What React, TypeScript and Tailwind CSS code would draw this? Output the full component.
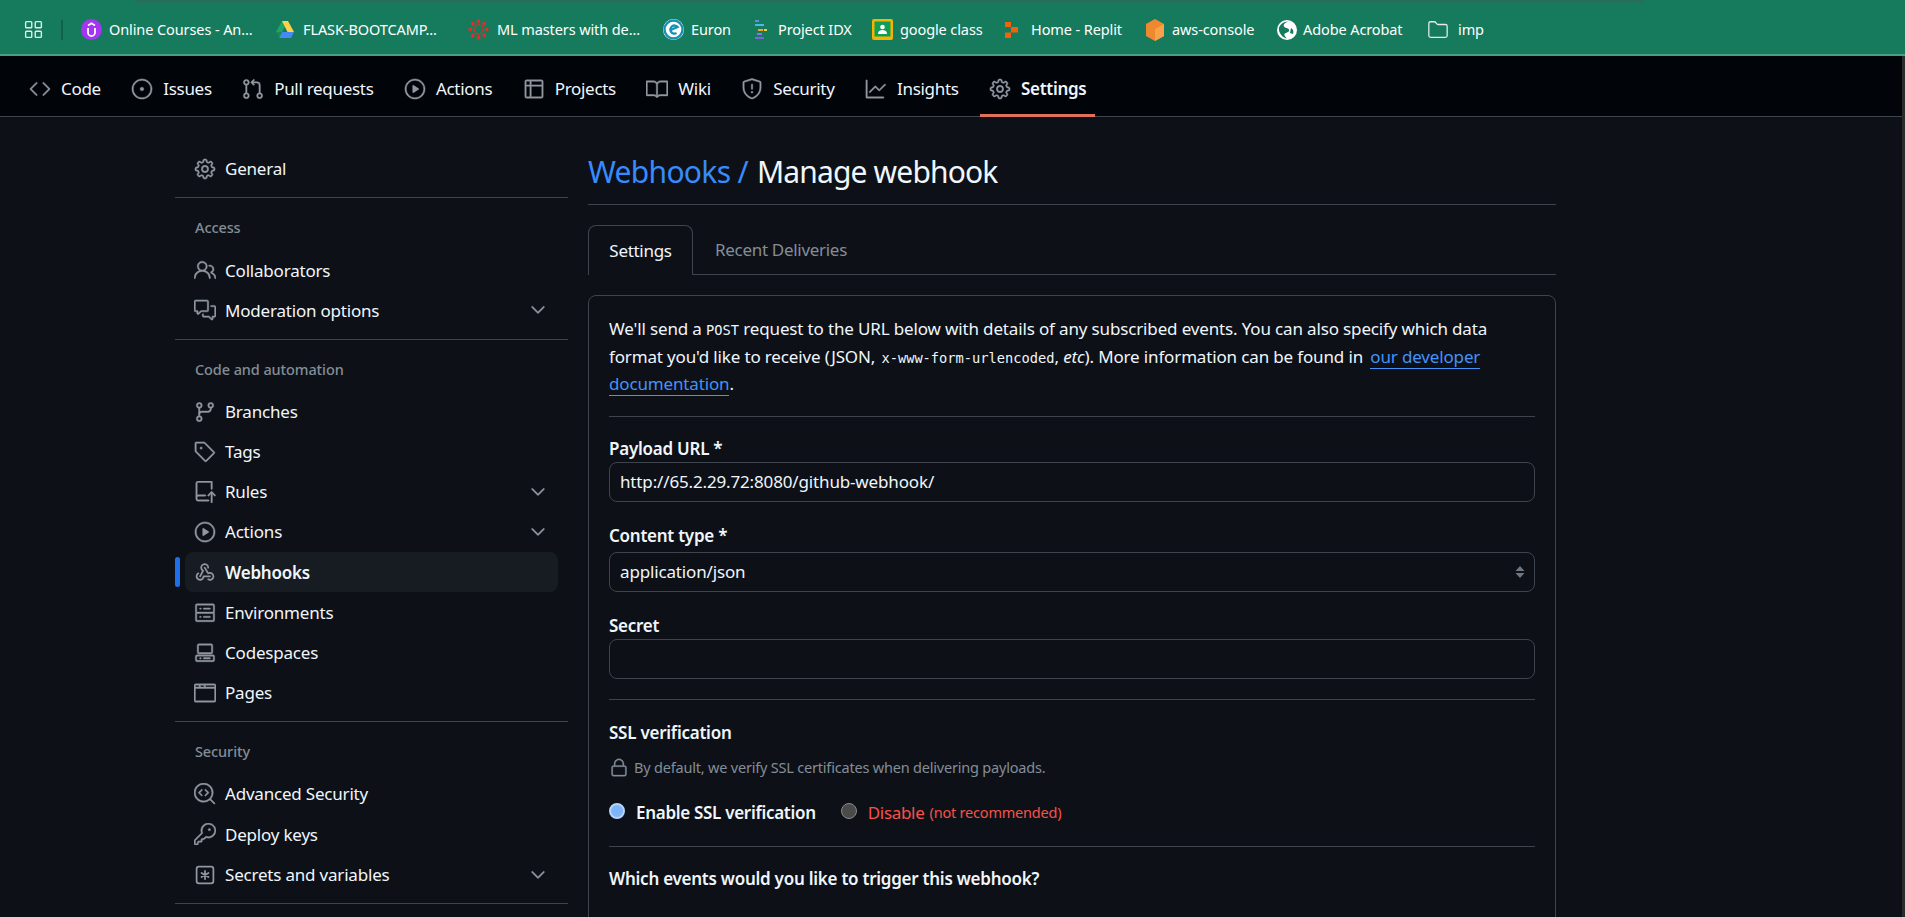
import { ReactNode } from 'react';
import {
  GoBook,
  GoBrowser,
  GoChevronDown,
  GoCode,
  GoCodescan,
  GoCodespaces,
  GoCommentDiscussion,
  GoGear,
  GoGitBranch,
  GoGitPullRequest,
  GoGraph,
  GoIssueOpened,
  GoKey,
  GoLock,
  GoPeople,
  GoPlay,
  GoRepoPush,
  GoServer,
  GoShield,
  GoTable,
  GoTag,
} from 'react-icons/go';
import { Folder, LayoutGrid } from 'lucide-react';

const FONT = "font-['Noto_Sans','Open_Sans',sans-serif]";

type IconProps = { size?: number; className?: string; strokeWidth?: number };

function WebhookIcon({ size = 20, className }: IconProps) {
  return (
    <svg width={size} height={size} viewBox="-1.5 -1.5 19 19" fill="currentColor" className={className}>
      <path d="M5.5 4.25a2.25 2.25 0 0 1 4.5 0 .75.75 0 0 0 1.5 0 3.75 3.75 0 1 0-6.14 2.889l-2.272 4.258a.75.75 0 0 0 1.324.706L7 7.25a.75.75 0 0 0-.309-1.015A2.25 2.25 0 0 1 5.5 4.25Z" />
      <path d="M7.364 3.607a.75.75 0 0 1 1.03.257l2.608 4.349a3.75 3.75 0 1 1-.628 6.785.75.75 0 0 1 .752-1.299 2.25 2.25 0 1 0-.033-3.88.75.75 0 0 1-1.03-.256L7.107 4.636a.75.75 0 0 1 .257-1.03Z" />
      <path d="M2.9 8.776A.75.75 0 0 1 2.625 9.8 2.25 2.25 0 1 0 6 11.75a.75.75 0 0 1 .75-.751h5.5a.75.75 0 0 1 0 1.5H7.425a3.751 3.751 0 1 1-5.55-3.998.75.75 0 0 1 1.024.274Z" />
    </svg>
  );
}

function KeyAsteriskIcon({ size = 20, className }: IconProps) {
  return (
    <svg width={size} height={size} viewBox="-1.5 -1.5 19 19" fill="currentColor" className={className}>
      <path d="M0 2.75A2.75 2.75 0 0 1 2.75 0h10.5A2.75 2.75 0 0 1 16 2.75v10.5A2.75 2.75 0 0 1 13.25 16H2.75A2.75 2.75 0 0 1 0 13.25Zm2.75-1.25c-.69 0-1.25.56-1.25 1.25v10.5c0 .69.56 1.25 1.25 1.25h10.5c.69 0 1.25-.56 1.25-1.25V2.75c0-.69-.56-1.25-1.25-1.25Z" />
      <path d="M8 4.5v7M5 6.25l6 3.5M11 6.25l-6 3.5" stroke="currentColor" strokeWidth="1.5" strokeLinecap="round" />
    </svg>
  );
}

function UdemyIcon() {
  return (
    <svg width="21" height="21" viewBox="0 0 21 21">
      <circle cx="10.5" cy="10.5" r="10.5" fill="#a435f0" />
      <path d="M7 9v4.5a3.5 3.5 0 0 0 7 0V9" fill="none" stroke="#fff" strokeWidth="1.8" />
      <path d="M7 6.5l3.5-2.2L14 6.5" fill="none" stroke="#fff" strokeWidth="1.6" />
    </svg>
  );
}

function DriveIcon() {
  return (
    <svg width="20" height="20" viewBox="0 0 20 20">
      <path d="M7 1h6l-6 11H1z" fill="#1fa463" />
      <path d="M13 1l6 11h-6.5L7 1z" fill="#ffd04b" />
      <path d="M19 12l-3 6H4l3-6z" fill="#4688f4" />
      <path d="M1 12h6l-3 6z" fill="#1a8a55" />
    </svg>
  );
}

function CanvasIcon() {
  const dots = [0, 45, 90, 135, 180, 225, 270, 315];
  return (
    <svg width="21" height="21" viewBox="0 0 21 21">
      <circle cx="10.5" cy="10.5" r="4.6" fill="none" stroke="#d8312a" strokeWidth="1.6" strokeDasharray="2 1" />
      {dots.map((a) => (
        <circle
          key={a}
          cx={10.5 + 8.2 * Math.cos((a * Math.PI) / 180)}
          cy={10.5 + 8.2 * Math.sin((a * Math.PI) / 180)}
          r="2"
          fill="#d8312a"
        />
      ))}
    </svg>
  );
}

function EuronIcon() {
  return (
    <svg width="21" height="21" viewBox="0 0 21 21">
      <circle cx="10.5" cy="10.5" r="10.5" fill="#fff" />
      <circle cx="10.5" cy="10.5" r="9" fill="none" stroke="#1593b5" strokeWidth="2.4" />
      <path d="M6.5 11.5l8-3.5a4 4 0 1 0-1 6" fill="none" stroke="#1593b5" strokeWidth="2.4" />
    </svg>
  );
}

function IdxIcon() {
  return (
    <svg width="18" height="22" viewBox="0 0 18 22">
      <rect x="3" y="1" width="4" height="2" fill="#5f8df0" />
      <rect x="3" y="5" width="9" height="2" fill="#4fb8e8" />
      <rect x="6" y="10" width="5" height="2" fill="#f0a33a" />
      <rect x="12" y="10" width="3" height="2" fill="#e8d44a" />
      <rect x="5" y="14" width="5" height="2" fill="#9c6cf0" />
      <rect x="3" y="18" width="9" height="2" fill="#7e63e0" />
    </svg>
  );
}

function ClassroomIcon() {
  return (
    <svg width="21" height="21" viewBox="0 0 21 21">
      <rect width="21" height="21" rx="2" fill="#f4b400" />
      <rect x="2.5" y="2.5" width="16" height="15" fill="#0f9d58" />
      <circle cx="10.5" cy="8" r="2.3" fill="#fff" />
      <path d="M6 15c0-3 2-4 4.5-4s4.5 1 4.5 4z" fill="#fff" />
    </svg>
  );
}

function ReplitIcon() {
  return (
    <svg width="16" height="16" viewBox="0 0 16 16">
      <rect x="1" width="6" height="5" fill="#f26207" />
      <rect x="7" y="5" width="7" height="5.5" fill="#f26207" />
      <rect x="1" y="10.5" width="6" height="5.5" fill="#f26207" />
    </svg>
  );
}

function AwsIcon() {
  return (
    <svg width="20" height="22" viewBox="0 0 20 22">
      <path d="M10 0l9 5v12l-9 5-9-5V5z" fill="#f0892e" />
      <path d="M10 10l9-5v12l-9 5z" fill="#f9a24a" />
    </svg>
  );
}

function AcrobatIcon() {
  return (
    <svg width="20" height="20" viewBox="0 0 20 20">
      <circle cx="10" cy="10" r="10" fill="#fff" />
      <path d="M11 1.5c-3 1-5 3-4 5s4 1 5 3-2 3-4 4 1 4 2 5c-2 0-7-3-8-8s4-9 9-9z" fill="#167b5c" />
      <path d="M14 8c2 1 3 3 2 6l-3-1z" fill="#167b5c" />
    </svg>
  );
}

const bookmarks: { label: string; icon: ReactNode; box: string; text: string }[] = [
  { label: 'Online Courses - An...', icon: <UdemyIcon />, box: 'w-[28px]', text: 'w-[143px]' },
  { label: 'FLASK-BOOTCAMP...', icon: <DriveIcon />, box: 'w-[28px]', text: 'w-[142px]' },
  { label: 'ML masters with de...', icon: <CanvasIcon />, box: 'w-[29px]', text: 'w-[143px]' },
  { label: 'Euron', icon: <EuronIcon />, box: 'w-[28px]', text: 'w-[38px]' },
  { label: 'Project IDX', icon: <IdxIcon />, box: 'w-[26px]', text: 'w-[71px]' },
  { label: 'google class', icon: <ClassroomIcon />, box: 'w-[28px]', text: 'w-[81px]' },
  { label: 'Home - Replit', icon: <ReplitIcon />, box: 'w-[27px]', text: 'w-[91px]' },
  { label: 'aws-console', icon: <AwsIcon />, box: 'w-[27px]', text: 'w-[82px]' },
  { label: 'Adobe Acrobat', icon: <AcrobatIcon />, box: 'w-[26px]', text: 'w-[101px]' },
  {
    label: 'imp',
    icon: <Folder size={22} strokeWidth={1.4} className="text-[#e3ece8]" />,
    box: 'w-[31px]',
    text: 'w-[25px]',
  },
];

function BookmarkBar() {
  return (
    <div className="relative flex h-[56px] shrink-0 items-center border-b-2 border-[#4d9d85] bg-[#167b5c] pl-[23px] pt-[5px]">
      <div className="absolute left-[135px] top-0 h-[3px] w-[1510px] rounded-br-sm bg-[#25705c]" />
      <LayoutGrid size={21} strokeWidth={1.6} className="text-[#dfeee8]" />
      <div className="ml-[17px] mr-[18px] h-[20px] w-[2px] bg-[#0f6148]" />
      <div className="flex items-center gap-[23px]">
        {bookmarks.map((b) => (
          <div key={b.label} className="flex items-center">
            <div className={`flex items-center ${b.box}`}>{b.icon}</div>
            <span className={`whitespace-nowrap text-[14.5px] tracking-[-0.1px] text-white ${b.text}`}>{b.label}</span>
          </div>
        ))}
      </div>
    </div>
  );
}

const repoTabs = [
  { label: 'Code', icon: GoCode },
  { label: 'Issues', icon: GoIssueOpened },
  { label: 'Pull requests', icon: GoGitPullRequest },
  { label: 'Actions', icon: GoPlay },
  { label: 'Projects', icon: GoTable },
  { label: 'Wiki', icon: GoBook },
  { label: 'Security', icon: GoShield },
  { label: 'Insights', icon: GoGraph },
  { label: 'Settings', icon: GoGear, active: true },
];

function RepoNav() {
  return (
    <nav className="flex h-[61px] shrink-0 gap-[12.4px] border-b border-[#3d444d] bg-[#010409] pl-[20px]">
      {repoTabs.map((t) => (
        <a
          key={t.label}
          className={`-mb-px flex h-[61px] items-center gap-[10px] border-b-[3px] px-[9px] pt-[8px] text-[17px] tracking-[-0.3px] text-[#f0f6fc] ${
            t.active ? 'border-[#e0705a] font-semibold' : 'border-transparent'
          }`}
        >
          <t.icon size={22} strokeWidth={0.5} className="text-[#9198a1]" />
          {t.label}
        </a>
      ))}
    </nav>
  );
}

type SideItem = {
  label: string;
  icon: (props: IconProps) => ReactNode;
  chevron?: boolean;
  active?: boolean;
};

const sections: { title: string; items: SideItem[] }[] = [
  {
    title: 'Access',
    items: [
      { label: 'Collaborators', icon: GoPeople },
      { label: 'Moderation options', icon: GoCommentDiscussion, chevron: true },
    ],
  },
  {
    title: 'Code and automation',
    items: [
      { label: 'Branches', icon: GoGitBranch },
      { label: 'Tags', icon: GoTag },
      { label: 'Rules', icon: GoRepoPush, chevron: true },
      { label: 'Actions', icon: GoPlay, chevron: true },
      { label: 'Webhooks', icon: WebhookIcon, active: true },
      { label: 'Environments', icon: GoServer },
      { label: 'Codespaces', icon: GoCodespaces },
      { label: 'Pages', icon: GoBrowser },
    ],
  },
  {
    title: 'Security',
    items: [
      { label: 'Advanced Security', icon: GoCodescan },
      { label: 'Deploy keys', icon: GoKey },
      { label: 'Secrets and variables', icon: KeyAsteriskIcon, chevron: true },
    ],
  },
];

function SideRow({ item }: { item: SideItem }) {
  return (
    <div className="relative ml-[10px] mr-[10px] flex h-[40.2px] items-center">
      {item.active && <div className="absolute -left-[10px] top-[5px] h-[30px] w-[5px] rounded-full bg-[#1f6feb]" />}
      <div
        className={`flex h-[40px] flex-1 items-center gap-[9px] rounded-lg pl-[9px] pr-[9px] text-[17px] tracking-[-0.2px] text-[#f0f6fc] ${
          item.active ? 'bg-[#171b22] font-semibold' : ''
        }`}
      >
        <item.icon size={22} strokeWidth={0.5} className="text-[#9198a1]" />
        <span className="flex-1">{item.label}</span>
        {item.chevron && <GoChevronDown size={22} strokeWidth={0.5} className="text-[#9198a1]" />}
      </div>
    </div>
  );
}

function Sidebar() {
  return (
    <aside className="w-[393px] shrink-0 pt-[32px]">
      <SideRow item={{ label: 'General', icon: GoGear }} />
      {sections.map((s) => (
        <div key={s.title}>
          <div className="mt-[8px] h-px bg-[#3d444d]" />
          <div className="h-[52px] pl-[20px] pt-[19px] text-[14.5px] font-medium leading-5 tracking-[-0.1px] text-[#848d97]">
            {s.title}
          </div>
          {s.items.map((i) => (
            <SideRow key={i.label} item={i} />
          ))}
        </div>
      ))}
      <div className="mt-[8px] h-px bg-[#3d444d]" />
    </aside>
  );
}

function FieldLabel({ children, className }: { children: ReactNode; className: string }) {
  return <div className={`h-[24px] text-[17px] font-semibold leading-6 tracking-[-0.25px] text-[#f0f6fc] ${className}`}>{children}</div>;
}

function Code({ children, className = '' }: { children: ReactNode; className?: string }) {
  return <code className={`font-['DejaVu_Sans_Mono',monospace] text-[13.7px] tracking-normal ${className}`}>{children}</code>;
}

const inputCls =
  'block h-[40px] w-full rounded-lg border border-[#3d444d] bg-[#0d1117] px-[10px] text-[17px] tracking-[-0.15px] text-[#f0f6fc] outline-none appearance-none';

function WebhookForm() {
  return (
    <div className="mt-[20px] rounded-lg border border-[#3d444d] px-[20px] pt-[20px]">
      <p className="text-[17px] leading-[26.6px] tracking-[-0.15px] text-[#f0f6fc]">
        We'll send a <Code>POST</Code> request to the URL below with details of any subscribed events. You can also specify which data
        <br />
        format you'd like to receive (JSON, <Code className="ml-[2px]">x-www-form-urlencoded</Code>, <em>etc</em>). More information can be found in{' '}
        <a className="ml-[3px] border-b border-[#4493f8] text-[#4493f8]">our developer</a>
        <br />
        <a className="border-b border-[#4493f8] text-[#4493f8]">documentation</a>.
      </p>
      <div className="mt-[18px] h-px bg-[#3d444d]" />

      <FieldLabel className="mt-[20px]">Payload URL *</FieldLabel>
      <input className={`mt-px ${inputCls}`} defaultValue="http://65.2.29.72:8080/github-webhook/" />

      <FieldLabel className="mt-[22px]">Content type *</FieldLabel>
      <div className="relative mt-[4px]">
        <select className={inputCls} defaultValue="json">
          <option value="json">application/json</option>
        </select>
        <svg className="absolute right-[10px] top-[14px]" width="10" height="12" viewBox="0 0 10 12" fill="#6e7681">
          <path d="M5 0l4.5 5H.5zM5 12L.5 7h9z" />
        </svg>
      </div>

      <FieldLabel className="mt-[22px]">Secret</FieldLabel>
      <input className={`mt-px ${inputCls}`} />

      <div className="mt-[20px] h-px bg-[#3d444d]" />

      <FieldLabel className="mt-[21px]">SSL verification</FieldLabel>
      <div className="mt-[13px] flex h-[20px] items-center gap-[5px] text-[14.5px] tracking-[-0.2px] text-[#848d97]">
        <GoLock size={20} strokeWidth={0.4} />
        By default, we verify SSL certificates when delivering payloads.
      </div>
      <div className="mt-[23px] flex h-[24px] items-center">
        <span className="-mt-[3px] h-[16px] w-[16px] rounded-full border-2 border-[#b7d4f8] bg-[#7db4fb]" />
        <span className="ml-[11px] text-[17px] font-semibold tracking-[-0.3px] text-[#f0f6fc]">Enable SSL verification</span>
        <span className="-mt-[3px] ml-[25px] h-[16px] w-[16px] rounded-full border border-[#8a8a8a] bg-[#4a4a4a]" />
        <span className="ml-[11px] text-[17px] tracking-[-0.3px] text-[#f85149]">Disable</span>
        <span className="ml-[5px] text-[14.5px] tracking-[-0.2px] text-[#f85149]">(not recommended)</span>
      </div>

      <div className="mt-[21px] h-px bg-[#3d444d]" />
      <FieldLabel className="mt-[20px]">Which events would you like to trigger this webhook?</FieldLabel>
      <div className="mt-[23px] flex h-[24px] items-center">
        <span className="h-[16px] w-[16px] rounded-full border-2 border-[#b7d4f8] bg-[#7db4fb]" />
      </div>
    </div>
  );
}

function Main() {
  return (
    <main className="ml-[20px] w-[968px] shrink-0 pt-[32px]">
      <h1 className="h-[56px] border-b border-[#3d444d] text-[30px] leading-[46px] tracking-[-0.7px] text-[#f0f6fc]">
        <a className="text-[#388bfd]">Webhooks /</a> <span className="ml-[2px] tracking-[-0.85px]">Manage webhook</span>
      </h1>
      <div className="mt-[20px] flex h-[50px] border-b border-[#3d444d]">
        <div className="-mb-px flex h-[50px] w-[105px] items-center justify-center rounded-t-lg border border-b-0 border-[#3d444d] bg-[#0d1117] text-[17px] tracking-[-0.3px] text-[#f0f6fc]">
          Settings
        </div>
        <div className="ml-[22px] flex items-center text-[17px] tracking-[-0.3px] text-[#848d97]">Recent Deliveries</div>
      </div>
      <WebhookForm />
    </main>
  );
}

export default function App() {
  return (
    <div className={`flex h-[917px] flex-col overflow-hidden bg-[#0d1117] ${FONT}`}>
      <BookmarkBar />
      <div className="flex min-h-0 flex-1">
        <div className="flex min-w-0 flex-1 flex-col">
          <RepoNav />
          <div className="flex min-h-0 flex-1 overflow-hidden pl-[175px]">
            <Sidebar />
            <Main />
          </div>
        </div>
        <div className="w-[3px] shrink-0 bg-[#2b2b2b]" />
      </div>
    </div>
  );
}
